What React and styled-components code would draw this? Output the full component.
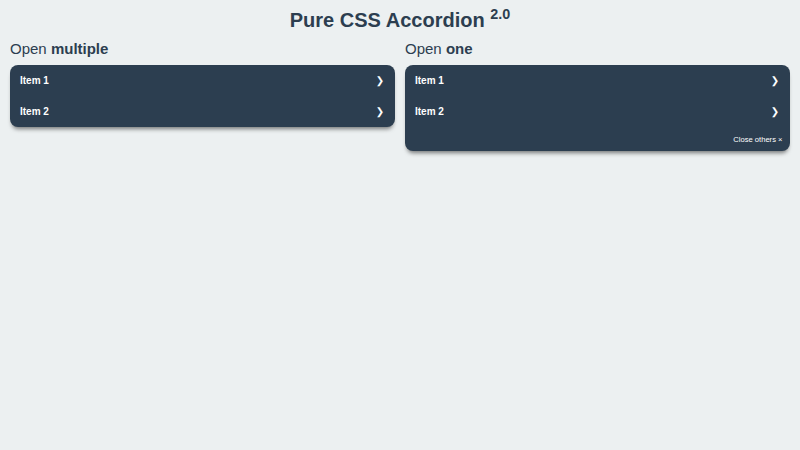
import React from 'react';
import styled, { createGlobalStyle } from 'styled-components';

const GlobalStyle = createGlobalStyle`
  html, body {
    margin: 0;
    height: 100%;
  }
  body {
    color: #2c3e50;
    background: #ecf0f1;
    padding: 0 10px 10px;
    font-family: 'Liberation Sans', Arial, sans-serif;
    font-size: 10px;
  }
`;

const Title = styled.h1`
  margin: 0;
  font-size: 20px;
  line-height: 40px;
  text-align: center;
  font-weight: bold;

  sup {
    font-size: 0.72em;
    line-height: 0;
  }
`;

const Row = styled.div`
  display: flex;
  gap: 10px;
`;

const Col = styled.div`
  flex: 1;
`;

const Heading = styled.h2`
  margin: 0 0 7.5px;
  font-size: 15px;
  line-height: 17.5px;
  font-weight: normal;
`;

const Tabs = styled.div`
  border-radius: 8px;
  overflow: hidden;
  box-shadow: 0 4px 4px -2px rgba(0, 0, 0, 0.5);
  background: #2c3e50;
`;

const TabLabel = styled.div`
  display: flex;
  justify-content: space-between;
  padding: 10px;
  color: white;
  font-weight: bold;
  line-height: 11px;

  &::after {
    content: '\\276F';
    width: 1em;
    height: 1em;
    text-align: center;
    font-family: 'DejaVu Sans', sans-serif;
  }
`;

const TabClose = styled.div`
  display: flex;
  justify-content: flex-end;
  padding: 7.5px;
  font-size: 7.6px;
  line-height: 9px;
  color: white;
`;

const Accordion = ({ items, close }) => (
  <Tabs>
    {items.map((item) => (
      <TabLabel key={item}>{item}</TabLabel>
    ))}
    {close && <TabClose>Close others &times;</TabClose>}
  </Tabs>
);

export default function App() {
  return (
    <>
      <GlobalStyle />
      <Title>
        Pure CSS Accordion <sup>2.0</sup>
      </Title>
      <Row>
        <Col>
          <Heading>
            Open <b>multiple</b>
          </Heading>
          <Accordion items={['Item 1', 'Item 2']} />
        </Col>
        <Col>
          <Heading>
            Open <b>one</b>
          </Heading>
          <Accordion items={['Item 1', 'Item 2']} close />
        </Col>
      </Row>
    </>
  );
}
